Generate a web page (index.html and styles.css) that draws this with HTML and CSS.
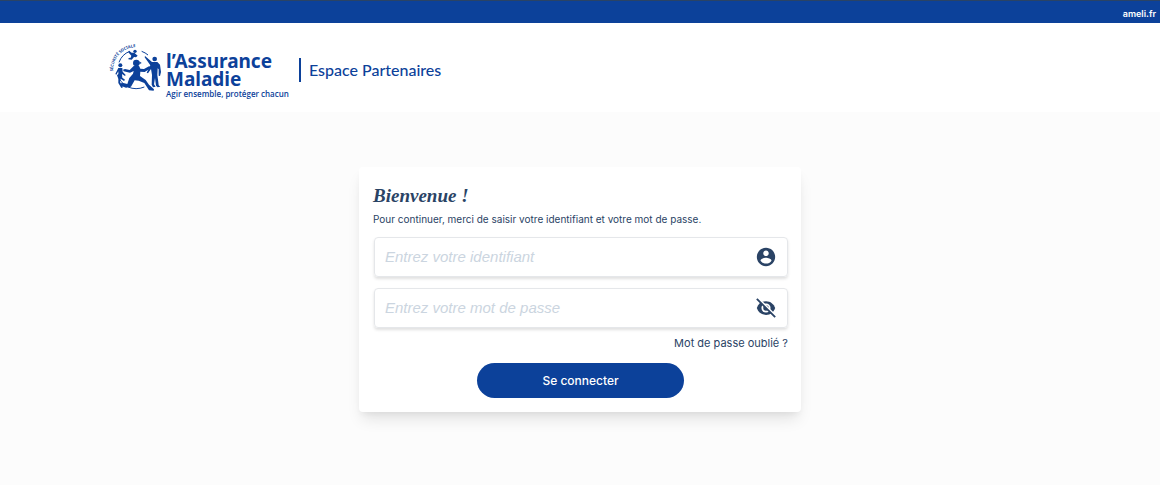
FILE: index.html
```html
<!DOCTYPE html>
<html lang="fr">
<head>
<meta charset="utf-8">
<meta name="viewport" content="width=device-width, initial-scale=1">
<title>Espace Partenaires</title>
<link rel="stylesheet" href="styles.css">
</head>
<body>
<nav class="topbar"><a class="topbar-link" href="#">ameli.fr</a></nav>
<header class="header">
  <div class="brand">
    <svg class="emblem" viewBox="0 0 168 162" aria-hidden="true">
      <defs><path id="motto" d="M15 91A69 69 0 0 1 98 20"/></defs>
      <text class="emblem-text"><textPath href="#motto">SÉCURITÉ SOCIALE</textPath></text>
      <g class="emblem-line">
        <path d="M33 64A56 56 0 0 1 65 31M101 31Q112 35 120 42M33 112Q37 121 46 128M60 138Q84 148 109 138"/>
      </g>
      <g class="emblem-shape">
        <circle cx="81" cy="31" r="5"/>
        <path d="M63 29L71 35L79 35L89 44L84 49L78 48L71 56L61 55L62 51L68 50L70 44L61 34Z"/>
        <circle cx="85" cy="66" r="10"/>
        <path d="M94 61L101 66L94 70Z"/>
        <path d="M77 75L93 74L97 83L108 84L123 76L129 78L126 83L110 93L97 92L96 105L113 117L123 131L138 145L137 149L123 148L109 126L92 119L80 118L69 137L54 140L40 135L38 127L46 126L58 129L64 111L75 98L77 90L66 95L47 91L45 86L51 84L65 87Z"/>
        <circle cx="37" cy="73" r="6"/>
        <path d="M31 81L43 81L44 92L53 102L51 105L42 99L43 110L51 116L48 120L38 113L36 123L45 139L40 141L31 126L31 113L27 103L31 99L31 91L25 101L22 99Z"/>
        <circle cx="140" cy="54" r="7"/>
        <path d="M111 45L132 63L148 63L156 71L159 93L156 105L152 104L152 85L149 82L148 102L151 124L152 133L157 137L149 139L144 134L141 111L138 130L143 137L135 139L131 131L132 102L129 84L120 97L116 95L127 73L110 49Z"/>
      </g>
    </svg>
    <div class="wordmark">
      <span class="wordmark-name">l’Assurance</span>
      <span class="wordmark-name">Maladie</span>
      <span class="wordmark-tag">Agir ensemble, protéger chacun</span>
    </div>
  </div>
  <span class="space-name">Espace Partenaires</span>
</header>
<main class="main">
  <form class="card">
    <h1 class="title">Bienvenue !</h1>
    <p class="intro">Pour continuer, merci de saisir votre identifiant et votre mot de passe.</p>
    <div class="field">
      <input class="input" type="text" aria-label="Identifiant" placeholder="Entrez votre identifiant">
      <svg class="icon" viewBox="0 0 24 24" aria-hidden="true"><path d="M12 2C6.480 2 2 6.480 2 12s4.480 10 10 10 10-4.480 10-10S17.520 2 12 2zm0 3c1.660 0 3 1.340 3 3s-1.340 3-3 3-3-1.340-3-3 1.340-3 3-3zm0 14.200c-2.500 0-4.710-1.280-6-3.220.030-1.990 4-3.080 6-3.080 1.990 0 5.970 1.090 6 3.080-1.290 1.940-3.500 3.220-6 3.220z"/></svg>
    </div>
    <div class="field field-password">
      <input class="input" type="password" aria-label="Mot de passe" placeholder="Entrez votre mot de passe">
      <button class="reveal" type="button" aria-label="Afficher le mot de passe">
        <svg class="icon" viewBox="0 0 24 24" aria-hidden="true"><path d="M12 4.500C7 4.500 3.500 7.500 2 12c1.500 4.500 5 7.500 10 7.500s8.500-3 10-7.500C20.500 7.500 17 4.500 12 4.500z"/><circle class="icon-gap" cx="12" cy="12" r="5"/><circle cx="12" cy="12" r="3"/><path class="icon-cut" d="M4 2L23 21"/><path class="icon-slash" d="M2 2L22 22"/></svg>
      </button>
    </div>
    <a class="forgot" href="#">Mot de passe oublié ?</a>
    <button class="submit" type="submit">Se connecter</button>
  </form>
</main>
</body>
</html>
```

FILE: styles.css
```css
* { box-sizing: border-box; }
body {
  margin: 0;
  min-height: 100vh;
  background: #fcfcfc;
  color: #2a4365;
  font-family: Inter, "Liberation Sans", sans-serif;
}
.topbar {
  display: flex;
  justify-content: flex-end;
  padding: 5px 4px 1px;
  border-top: 1px solid #2a4365;
  background: #0c419a;
}
.topbar-link {
  color: #fff;
  font: 600 9px/16px Inter, sans-serif;
  text-decoration: none;
}
.header {
  display: flex;
  align-items: center;
  gap: 10px;
  padding: 18px 108px 13px;
  background: #fff;
  color: #0c419a;
}
.brand { display: flex; gap: 2px; }
.emblem { width: 56px; height: 54px; }
.emblem-text { font: 700 12px "Noto Sans", sans-serif; fill: #0c419a; }
.emblem-line { fill: none; stroke: #0c419a; stroke-width: 3; }
.emblem-shape { fill: #0c419a; }
.wordmark {
  display: flex;
  flex-direction: column;
  padding-top: 11px;
  font-family: "Noto Sans", sans-serif;
}
.wordmark-name { font-size: 19px; font-weight: 700; line-height: 18px; }
.wordmark-tag { font: 600 8px/11px "Open Sans", sans-serif; }
.space-name {
  padding-left: 8px;
  border-left: 2px solid #0c419a;
  font: 500 16px/24px Lato, sans-serif;
}
.main { display: flex; justify-content: center; padding: 55px 16px 24px; }
.card {
  display: flex;
  flex-direction: column;
  width: 100%;
  max-width: 442px;
  padding: 15px 13px 14px 14px;
  border-radius: 4px;
  background: #fff;
  box-shadow: 0 10px 15px -3px rgba(0, 0, 0, .1), 0 4px 6px -2px rgba(0, 0, 0, .05);
}
.title {
  margin: 0;
  font: italic 700 19px/28px "Liberation Serif", serif;
}
.intro {
  margin: 0 0 10px;
  padding-top: 1px;
  font-size: 10px;
  line-height: 16px;
}
.field {
  display: flex;
  align-items: center;
  margin: 0 0 11px 1px;
  padding: 8px 10px;
  border: 1px solid #e5e7ea;
  border-radius: 4px;
  box-shadow: 0 2px 3px rgba(0, 0, 0, .12);
}
.field-password { padding: 8px 10px; }
.input {
  flex: 1;
  min-width: 0;
  height: 22px;
  padding: 0;
  border: 0;
  outline: 0;
  background: transparent;
  color: #2a4365;
  font: 15px/22px "Liberation Sans", sans-serif;
}
.input::placeholder { color: #cbd5e0; font-style: italic; opacity: 1; }
.icon { display: block; width: 22px; height: 22px; fill: #2a4365; }
.icon-gap { fill: #fff; }
.icon-cut { stroke: #fff; stroke-width: 2; }
.icon-slash { stroke: #2a4365; stroke-width: 2; }
.reveal { padding: 0; border: 0; background: transparent; }
.forgot {
  align-self: flex-end;
  margin: -4px 0 12px;
  color: #2a4365;
  font-size: 11px;
  line-height: 16px;
  text-decoration: none;
}
.submit {
  align-self: center;
  width: 50%;
  padding: 8px;
  border: 0;
  border-radius: 18px;
  background: #0c419a;
  color: #fff;
  font: 500 12px/19px Inter, sans-serif;
}
```
